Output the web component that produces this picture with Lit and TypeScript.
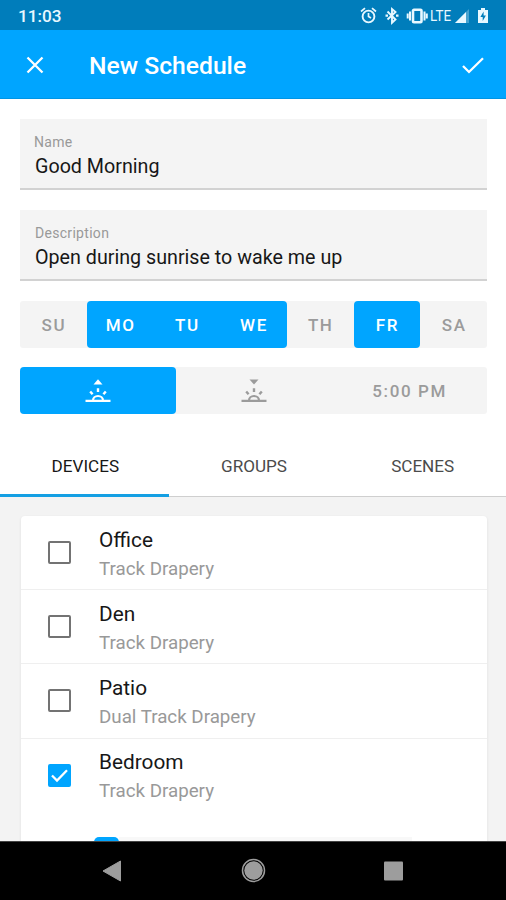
import { LitElement, html, css, svg } from "lit";
import { customElement, state } from "lit/decorators.js";
import { classMap } from "lit/directives/class-map.js";

interface Device { name: string; kind: string; on: boolean }

const sun = (set: boolean) => html`<svg class="sun" viewBox="0 0 26 24">
  ${set ? svg`<path d="M8.500 .5h9L13 5.500z" fill="currentColor"/>` : svg`<path d="M8.500 5.500h9L13 .2z" fill="currentColor"/>`}
  <path d="M.5 21.800h25M8 21.500a5 4.500 0 0 1 10 0" fill="none" stroke="currentColor" stroke-width="2.200"/>
  <path d="M13 9.300v3.700M5.200 12.500l2.400 2.700M20.800 12.500l-2.400 2.700" fill="none" stroke="currentColor" stroke-width="2.400"/>
</svg>`;

@customElement("app-root")
export class AppRoot extends LitElement {
  @state() days: [string, boolean][] = [["SU", false], ["MO", true], ["TU", true], ["WE", true], ["TH", false], ["FR", true], ["SA", false]];
  @state() devices: Device[] = [
    { name: "Office", kind: "Track Drapery", on: false },
    { name: "Den", kind: "Track Drapery", on: false },
    { name: "Patio", kind: "Dual Track Drapery", on: false },
    { name: "Bedroom", kind: "Track Drapery", on: true },
  ];

  static styles = css`
    :host { display: flex; flex-direction: column; height: 900px; overflow: hidden; background: #fff; color: #171717; font-family: Roboto, sans-serif; }
    * { box-sizing: border-box; }
    svg { display: block; flex: none; }
    .status { height: 30px; flex: none; background: #007dbb; color: #e8f8ff; display: flex; align-items: center; padding: 2px 15px 0 18px; font-size: 17.200px; font-weight: 500; }
    .status .icons { margin-left: auto; }
    .bar { height: 69px; flex: none; background: #00a5ff; border-bottom: 1px solid #0095e5; color: #fff; display: flex; align-items: center; padding: 2px 22px 0 26px; }
    .bar h1 { margin: 1px auto 0 45px; padding-top: 1px; font-size: 24.700px; font-weight: 500; line-height: 30px; }
    .form { padding: 20px 19px 0 20px; flex: none; }
    .field { height: 71px; background: #f4f4f4; border-bottom: 2px solid #d2d2d2; padding: 15px 15px 0; margin-bottom: 20px; }
    .field label { display: block; font-size: 14px; line-height: 16px; color: #999; letter-spacing: .3px; }
    .field:first-child label { margin-left: -1px; }
    .field span { display: block; font-size: 19.700px; line-height: 24px; margin-top: 5px; }
    .seg { display: grid; height: 47px; background: #f4f4f4; border-radius: 3px; color: #9b9b9b; font-size: 17px; font-weight: 500; letter-spacing: 1.600px; }
    .seg.days { grid-template-columns: repeat(7, 1fr); margin-bottom: 19px; }
    .seg.times { grid-template-columns: repeat(3, 1fr); }
    .cell { display: flex; align-items: center; justify-content: center; padding: 0 0 0 1px; }
    .cell.on { background: #00a5ff; color: #fff; border-radius: 4px; }
    .cell.on + .cell.on { border-top-left-radius: 0; border-bottom-left-radius: 0; }
    .cell.joined { border-top-right-radius: 0; border-bottom-right-radius: 0; }
    .sun { width: 26px; height: 24px; }
    .tabs { display: grid; grid-template-columns: repeat(3, 1fr); height: 83px; flex: none; border-bottom: 1px solid #cfcfcf; font-size: 17.100px; color: #4b4b4b; }
    .tab { display: flex; align-items: center; justify-content: center; padding: 23px 0 0 2px; border-bottom: 3px solid transparent; height: 83px; }
    .tab.on { color: #171717; border-color: #149fe3; }
    .list { flex: 1; min-height: 0; overflow: hidden; background: #f3f3f3; padding: 19px 19px 0 21px; }
    .card { background: #fff; border-radius: 4px; box-shadow: 0 1px 3px #00000016; height: 420px; }
    .row { height: 74.200px; display: flex; align-items: center; padding-left: 27px; border-bottom: 1px solid #efefef; }
    .row:last-of-type { border-color: transparent; }
    .check { width: 23px; height: 23px; border: 2px solid #737373; border-radius: 2px; flex: none; }
    .check.on { background: #00a5ff; border-color: #00a5ff; }
    .check svg { width: 19px; height: 19px; }
    .text { margin-left: 28px; padding-top: 3px; }
    .name { font-size: 20.800px; line-height: 27px; }
    .kind { font-size: 18.750px; line-height: 25px; margin-top: 3px; color: #999; }
    .slider { display: flex; align-items: flex-start; margin: 24px 75px 0 73px; }
    .thumb { width: 25px; height: 25px; background: #00a5ff; border-radius: 5px; }
    .track { flex: 1; height: 4px; background: #f8f8f8; }
    .nav { height: 59px; flex: none; background: #000; border-top: 1px solid #444; }
  `;

  render() {
    return html`
      <div class="status"><span>11:03</span>
        <svg class="icons" width="132" height="20" viewBox="0 0 132 20" fill="none" stroke="currentColor">
          <circle cx="9.500" cy="10.500" r="5.900" stroke-width="1.900"/><path d="M9.500 7V10.500l2.500 1.500M2 5.500l4-3.300M17 5.500l-4-3.300" stroke-width="1.700"/>
          <path d="M28.500 5.500l8 8L33 16.800V3l3.500 3-8 7.500" stroke-width="1.900"/><path d="M26.500 9.700h2.500M37 9.700h2.500" stroke-width="2.200"/>
          <rect x="54" y="3.800" width="8.500" height="12.400" rx="1" stroke-width="2.600"/><path d="M51 5.500v9M65.500 5.500v9M48.700 7.500v5M67.800 7.500v5" stroke-width="2"/>
          <text x="71" y="15.300" font-size="15.500" font-weight="400" textLength="21" lengthAdjust="spacingAndGlyphs" fill="currentColor" stroke="none">LTE</text>
          <path d="M96 17L110 3v14z" fill="currentColor" stroke="none" opacity=".3"/><path d="M96 17L107 6v11z" fill="currentColor" stroke="none"/>
          <path d="M119 4h3V2h4v2h3v13h-10z" fill="currentColor" stroke="none"/><path d="M124.600 5.500l-3.200 5.500h2.300v4l3.200-5.500h-2.300z" fill="#007dbb" stroke="none"/>
        </svg>
      </div>
      <div class="bar">
        <svg width="18" height="18" viewBox="0 0 18 18"><path d="M1.500 1.500l15 15M16.500 1.500l-15 15" stroke="currentColor" stroke-width="2.300"/></svg>
        <h1>New Schedule</h1>
        <svg width="22" height="17" viewBox="0 0 22 17"><path d="M1 9l6 6L21 1.300" stroke="currentColor" stroke-width="2.300" fill="none"/></svg>
      </div>
      <div class="form">
        <div class="field"><label>Name</label><span>Good Morning</span></div>
        <div class="field"><label>Description</label><span>Open during sunrise to wake me up</span></div>
        <div class="seg days">${this.days.map(([d, on], i) => html`<div class=${classMap({ cell: true, on, joined: on && !!this.days[i + 1]?.[1] })}>${d}</div>`)}</div>
        <div class="seg times"><div class="cell on">${sun(false)}</div><div class="cell">${sun(true)}</div><div class="cell">5:00 PM</div></div>
      </div>
      <div class="tabs"><div class="tab on">DEVICES</div><div class="tab">GROUPS</div><div class="tab">SCENES</div></div>
      <div class="list"><div class="card">
        ${this.devices.map((d) => html`<section class="row">
          <div class=${classMap({ check: true, on: d.on })}>${d.on ? html`<svg viewBox="0 0 19 19"><path d="M2 9.500l5 5L17 4.300" fill="none" stroke="#fff" stroke-width="2.300"/></svg>` : ""}</div>
          <div class="text"><div class="name">${d.name}</div><div class="kind">${d.kind}</div></div>
        </section>`)}
        <div class="slider"><div class="thumb"></div><div class="track"></div></div>
      </div></div>
      <div class="nav"><svg width="506" height="58" viewBox="0 0 506 58" fill="#9d9d9d">
        <path d="M103 29L120.500 19v20z" stroke="#9d9d9d" stroke-width="1" stroke-linejoin="round"/>
        <circle cx="253.500" cy="28.500" r="9.200"/><circle cx="253.500" cy="28.500" r="11" fill="none" stroke="#9d9d9d" stroke-width="1.500"/>
        <rect x="384" y="19.500" width="19" height="19" rx="1"/>
      </svg></div>`;
  }
}
